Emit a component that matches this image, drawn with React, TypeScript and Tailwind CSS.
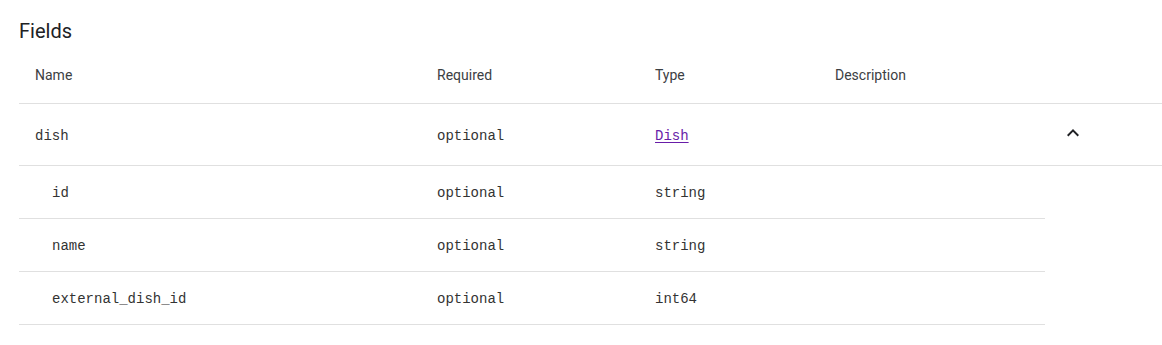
import React from "react";

const sans = "font-['Roboto','Liberation_Sans',sans-serif]";
const mono = "font-['Liberation_Mono','DejaVu_Sans_Mono',monospace]";

const subRows = [
  { name: "id", type: "string" },
  { name: "name", type: "string" },
  { name: "external_dish_id", type: "int64" },
];

export default function App() {
  return (
    <div className={`bg-white w-[1162px] h-[345px] pl-[19px] ${sans}`}>
      <h2 className="pt-[17px] text-[20px] leading-[28px] text-[#202124] mb-[2px]">Fields</h2>
      <div className="grid grid-cols-[402px_218px_180px_226px_117px] h-[57px] border-b border-[#e0e0e0] items-center text-[14px] text-[#3c4043]">
        <div className="pl-4">Name</div>
        <div className="pl-4">Required</div>
        <div className="pl-4">Type</div>
        <div className="pl-4">Description</div>
        <div></div>
      </div>
      <div className={`grid grid-cols-[402px_218px_180px_226px_117px] h-[62px] border-b border-[#e0e0e0] items-center text-[14px] text-[#333333] ${mono}`}>
        <div className="pl-4 pt-[3px]">dish</div>
        <div className="pl-4 pt-[3px]">optional</div>
        <div className="pl-4 pt-[3px]">
          <a href="#" className="text-[#681da8] underline underline-offset-2">Dish</a>
        </div>
        <div className="pl-4"></div>
        <div className="pl-4 flex items-center">
          <svg width="24" height="24" viewBox="0 0 24 24" className="mt-[-3px]">
            <path d="M12 8l-6 6 1.41 1.41L12 10.83l4.59 4.58L18 14z" fill="#202124" />
          </svg>
        </div>
      </div>
      <div className="w-[1026px]">
        {subRows.map((r) => (
          <div
            key={r.name}
            className={`grid grid-cols-[402px_218px_180px_226px] h-[53px] border-b border-[#e0e0e0] items-center text-[14px] text-[#333333] ${mono}`}
          >
            <div className="pl-[33px] pt-[2px]">{r.name}</div>
            <div className="pl-4 pt-[2px]">optional</div>
            <div className="pl-4 pt-[2px]">{r.type}</div>
            <div className="pl-4"></div>
          </div>
        ))}
      </div>
    </div>
  );
}
